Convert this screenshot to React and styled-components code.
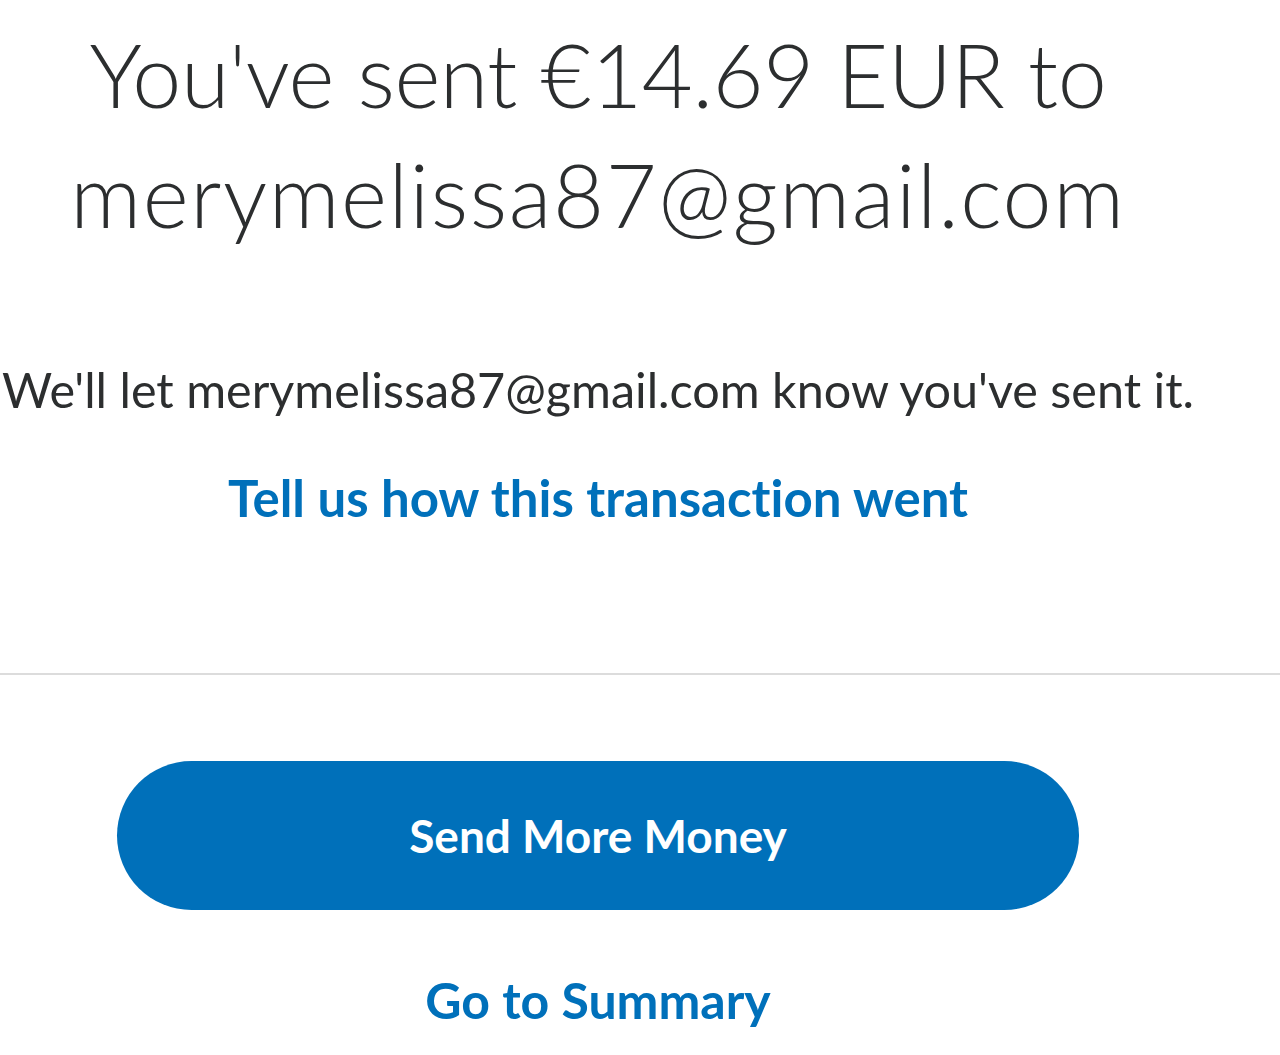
import React from 'react'
import styled, { createGlobalStyle } from 'styled-components'

const Global = createGlobalStyle`
  html, body {
    margin: 0;
    padding: 0;
    background: #ffffff;
    overflow: hidden;
  }
  body {
    font-family: Lato, "Open Sans", "Liberation Sans", sans-serif;
    font-variant-ligatures: none;
    color: #2c2e2f;
  }
`

const Page = styled.div`
  width: 1280px;
  height: 1055px;
  display: flex;
  flex-direction: column;
`

const Column = styled.div`
  width: 1196px;
  display: flex;
  flex-direction: column;
  align-items: center;
`

const Heading = styled.h1`
  margin: 14px 0 0;
  font-size: 88px;
  font-weight: 300;
  line-height: 120px;
  text-align: center;
  white-space: nowrap;
  letter-spacing: -0.4px;
  color: #2c2e2f;
`

const Email = styled.span`
  letter-spacing: 1.6px;
`

const Note = styled.p`
  margin: 105px 0 0;
  font-size: 48.5px;
  line-height: 60px;
  white-space: nowrap;
  color: #2c2e2f;
`

const TextLink = styled.a`
  display: block;
  margin-top: ${p => p.$top || 0}px;
  font-size: ${p => p.$size || 48}px;
  font-weight: 700;
  line-height: 60px;
  color: #0070ba;
  text-decoration: none;
  white-space: nowrap;
`

const Divider = styled.hr`
  width: 1280px;
  margin: 145px 0 0;
  border: none;
  border-top: 2px solid #dcdcdc;
  align-self: flex-start;
`

const Button = styled.button`
  margin-top: 86px;
  width: 962px;
  height: 149px;
  border: none;
  border-radius: 75px;
  background: #0070ba;
  color: #ffffff;
  font-family: inherit;
  font-size: 46px;
  font-weight: 700;
  cursor: pointer;
`

export default function App() {
  return (
    <Page>
      <Global />
      <Column>
        <Heading>
          You've sent €14.69 EUR to
          <br />
          <Email>merymelissa87@gmail.com</Email>
        </Heading>
        <Note>We'll let merymelissa87@gmail.com know you've sent it.</Note>
        <TextLink href="#" $top={49} $size={51}>Tell us how this transaction went</TextLink>
      </Column>
      <Divider />
      <Column>
        <Button>Send More Money</Button>
        <TextLink href="#" $top={60} $size={50}>Go to Summary</TextLink>
      </Column>
    </Page>
  )
}
